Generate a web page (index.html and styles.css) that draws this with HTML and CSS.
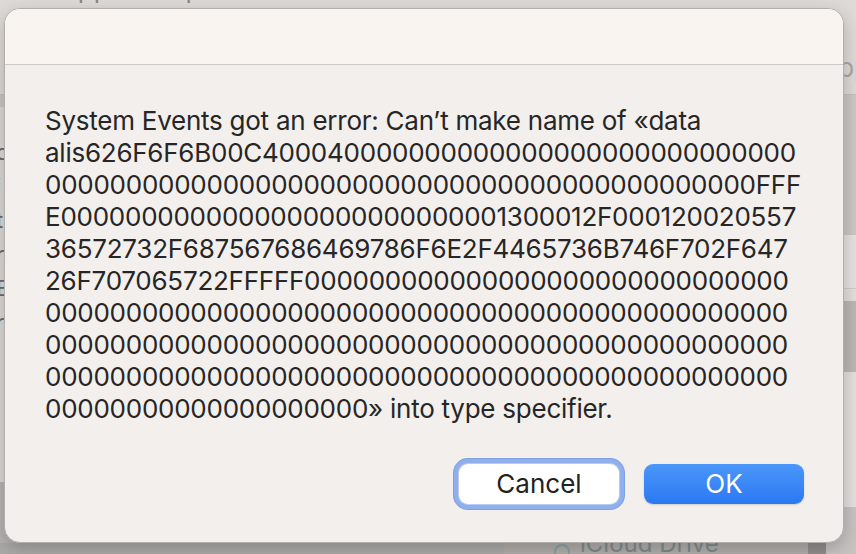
FILE: index.html
```html
<!DOCTYPE html>
<html lang="en">
<head>
<meta charset="utf-8">
<title>System Events error</title>
<link rel="stylesheet" href="styles.css">
</head>
<body>
<div class="backdrop">
  <header class="bd-top">
    <span class="bd-title">Dropper Droplet</span>
    <span class="bd-right">pp</span>
  </header>
  <div class="bd-main">
    <aside class="bd-side">
      <div class="bd-side-list">
        <span>d</span><span>i</span><span>t</span><span>r</span><span>E</span><span>r</span>
      </div>
      <div class="bd-side-foot"></div>
    </aside>
    <section class="bd-list">
      <div class="bd-list-body"></div>
      <div class="bd-row"><span class="bd-icon"></span>iCloud Drive</div>
    </section>
    <div class="bd-scroll"></div>
    <div class="bd-panel">
      <div class="band b1"></div>
      <div class="band b2"></div>
      <div class="band b3"></div>
      <div class="band b4"></div>
      <div class="band b5"></div>
      <div class="band b6"></div>
    </div>
  </div>
</div>

<div class="dialog" role="alertdialog">
  <div class="dialog-title"></div>
  <div class="dialog-body">
    <p class="message">
      <span class="ln">System Events got an error: Can’t make name of «data</span>
      <span class="ln">alis626F6F6B00C400040000000000000000000000000000</span>
      <span class="ln">00000000000000000000000000000000000000000000FFF</span>
      <span class="ln">E0000000000000000000000000001300012F000120020557</span>
      <span class="ln">36572732F687567686469786F6E2F4465736B746F702F647</span>
      <span class="ln">26F707065722FFFFF000000000000000000000000000000</span>
      <span class="ln">0000000000000000000000000000000000000000000000</span>
      <span class="ln">0000000000000000000000000000000000000000000000</span>
      <span class="ln">0000000000000000000000000000000000000000000000</span>
      <span class="ln">00000000000000000000» into type specifier.</span>
    </p>
    <div class="actions">
      <button class="btn btn-cancel" type="button">Cancel</button>
      <button class="btn btn-ok" type="button">OK</button>
    </div>
  </div>
</div>
</body>
</html>
```

FILE: styles.css
```css
* { box-sizing: border-box; }

html, body {
  margin: 0;
  padding: 0;
  width: 856px;
  height: 554px;
  overflow: hidden;
}

body {
  background: #dcd8d5;
  font-family: Inter, "Noto Sans", "Liberation Sans", sans-serif;
  position: relative;
}

/* ---------- window behind the alert ---------- */
.backdrop {
  display: flex;
  flex-direction: column;
  width: 856px;
  height: 554px;
}

.bd-top {
  height: 95px;
  flex: none;
  background: #dedad7;
  border-bottom: 1px solid #c4c0bd;
  display: flex;
  justify-content: space-between;
  align-items: flex-start;
  overflow: hidden;
}

.bd-title {
  margin: -27px 0 0 34px;
  font-size: 26px;
  line-height: 31px;
  color: #8b8887;
  white-space: nowrap;
}

.bd-right {
  margin: 52px -14px 0 0;
  font-size: 26px;
  color: #aaa7a5;
}

.bd-main {
  flex: 1;
  display: flex;
  min-height: 0;
}

.bd-side {
  width: 504px;
  flex: none;
  display: flex;
  flex-direction: column;
  background: linear-gradient(#c9c6c3 0 12px, #dcd9d6 12px);
}

.bd-side-list {
  display: flex;
  flex-direction: column;
  gap: 12px;
  padding: 46px 0 0 0;
  margin-left: -4px;
  font-size: 22px;
  color: #6d6a68;
  line-height: 22px;
}

.bd-side-foot {
  margin-top: auto;
  height: 72px;
  background: linear-gradient(#b7b5b3 0 61px, #adabaa 61px);
}

.bd-list {
  width: 304px;
  flex: none;
  display: flex;
  flex-direction: column;
  background: #dedbd8;
}

.bd-list-body { flex: 1; }

.bd-row {
  height: 26px;
  background: #b2aeab;
  display: flex;
  align-items: flex-end;
  gap: 10px;
  padding-left: 50px;
  font-size: 24px;
  color: #7d8c8f;
  line-height: 20px;
  overflow: hidden;
}

.bd-icon {
  width: 16px;
  height: 16px;
  border: 2px solid #86a3aa;
  border-radius: 50%;
  margin-bottom: -6px;
}

.bd-scroll {
  width: 18px;
  flex: none;
  background: #928f8d;
}

.bd-panel {
  flex: 1;
  display: flex;
  flex-direction: column;
}

.band.b1 { height: 140px; background: #cbc7c4; }
.band.b2 { height: 54px; background: #e5e2e0; border-bottom: 1px solid #cfccc9; }
.band.b3 { height: 12px; background: #e2dfdd; }
.band.b4 { height: 71px; background: #bab7b5; }
.band.b5 { height: 135px; background: #e3e0de; }
.band.b6 { flex: 1; background: #c6c3c1; }

/* ---------- alert dialog ---------- */
.dialog {
  position: absolute;
  left: 4px;
  top: 8px;
  width: 840px;
  height: 535px;
  border-radius: 16px;
  background: #f3efec;
  border: 1px solid #b3afac;
  box-shadow: 0 6px 18px rgba(0, 0, 0, 0.22);
  display: flex;
  flex-direction: column;
  overflow: hidden;
}

.dialog-title {
  height: 56px;
  flex: none;
  background: #faf4f0;
  border-bottom: 1px solid #cdc8c5;
}

.dialog-body {
  flex: 1;
  display: flex;
  flex-direction: column;
  padding: 40px 39px 38px 40px;
}

.message {
  margin: 0;
  font-size: 26px;
  line-height: 32px;
  letter-spacing: -0.25px;
  color: #262626;
}

.ln {
  display: block;
  white-space: nowrap;
}

.actions {
  margin-top: auto;
  display: flex;
  justify-content: flex-end;
  gap: 25px;
}

.btn {
  width: 160px;
  height: 40px;
  border: none;
  border-radius: 9px;
  font-family: inherit;
  font-size: 26px;
  padding: 0;
  line-height: 40px;
}

.btn-cancel {
  background: #ffffff;
  color: #222222;
  box-shadow: 0 0 0 1px #b9cbef, 0 0 0 5px #8fb0ec, 0 0 0 6px #7e9fe2;
}

.btn-ok {
  background: linear-gradient(#4b97fa, #2c78f3);
  color: #ffffff;
  box-shadow: 0 1px 2px rgba(0, 0, 0, 0.15);
}
```
